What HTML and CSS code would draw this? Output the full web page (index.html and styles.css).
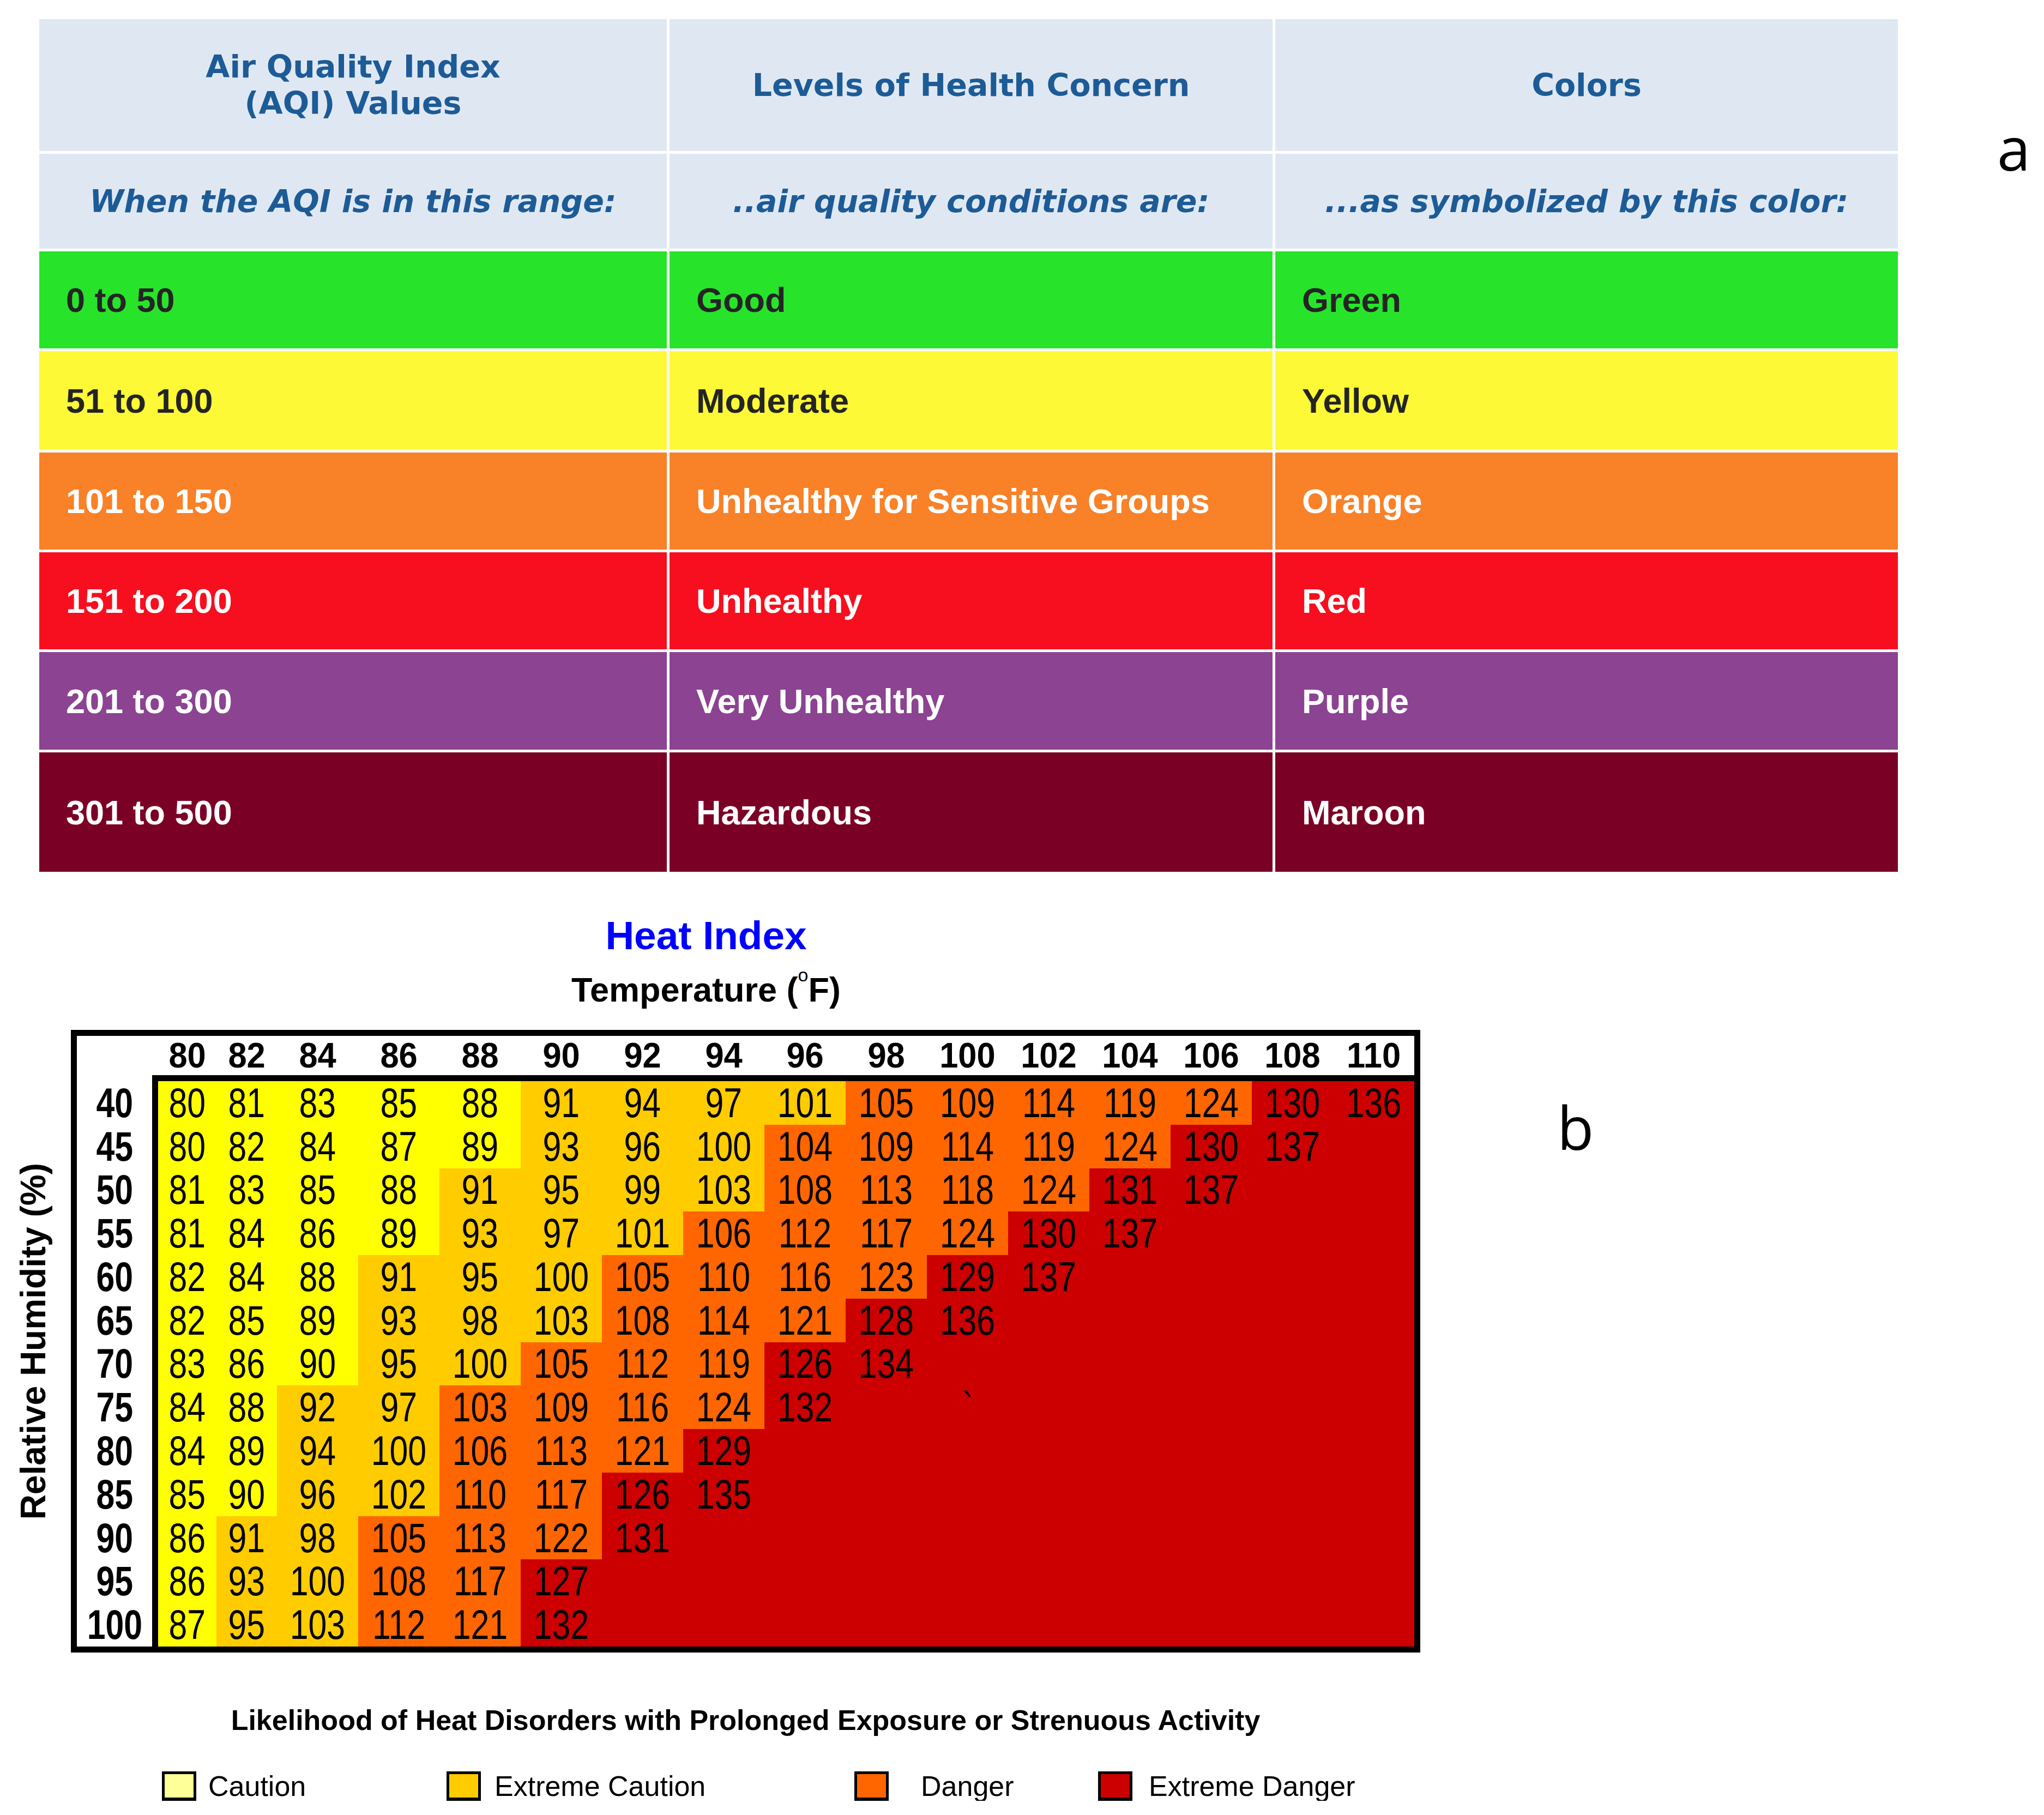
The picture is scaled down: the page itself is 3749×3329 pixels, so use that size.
FILE: index.html
```html
<!DOCTYPE html>
<html lang="en">
<head>
<meta charset="utf-8">
<title>AQI and Heat Index</title>
<link rel="stylesheet" href="styles.css">
</head>
<body>
<section class="top">
  <div class="aqi">
    <div class="aqi-h">Air Quality Index<br>(AQI) Values</div>
    <div class="aqi-h">Levels of Health Concern</div>
    <div class="aqi-h">Colors</div>
    <div class="aqi-h aqi-s">When the AQI is in this range:</div>
    <div class="aqi-h aqi-s">..air quality conditions are:</div>
    <div class="aqi-h aqi-s">...as symbolized by this color:</div>

    <div class="aqi-c good">0 to 50</div>
    <div class="aqi-c good">Good</div>
    <div class="aqi-c good">Green</div>

    <div class="aqi-c moderate">51 to 100</div>
    <div class="aqi-c moderate">Moderate</div>
    <div class="aqi-c moderate">Yellow</div>

    <div class="aqi-c usg">101 to 150</div>
    <div class="aqi-c usg">Unhealthy for Sensitive Groups</div>
    <div class="aqi-c usg">Orange</div>

    <div class="aqi-c unhealthy">151 to 200</div>
    <div class="aqi-c unhealthy">Unhealthy</div>
    <div class="aqi-c unhealthy">Red</div>

    <div class="aqi-c very">201 to 300</div>
    <div class="aqi-c very">Very Unhealthy</div>
    <div class="aqi-c very">Purple</div>

    <div class="aqi-c hazard">301 to 500</div>
    <div class="aqi-c hazard">Hazardous</div>
    <div class="aqi-c hazard">Maroon</div>
  </div>
  <div class="panel-label label-a">a</div>
</section>

<section class="heat">
  <div class="hi-titles">
    <div class="hi-title">Heat Index</div>
    <div class="hi-sub">Temperature (<span class="deg">o</span>F)</div>
  </div>

  <div class="hi-body">
    <div class="ylab"><span>Relative Humidity (%)</span></div>
    <div class="hi-box">
      <div class="corner"></div>
      <div class="temps">
        <div><span>80</span></div><div><span>82</span></div><div><span>84</span></div><div><span>86</span></div>
        <div><span>88</span></div><div><span>90</span></div><div><span>92</span></div><div><span>94</span></div>
        <div><span>96</span></div><div><span>98</span></div><div><span>100</span></div><div><span>102</span></div>
        <div><span>104</span></div><div><span>106</span></div><div><span>108</span></div><div><span>110</span></div>
      </div>
      <div class="hums">
        <div><span>40</span></div><div><span>45</span></div><div><span>50</span></div><div><span>55</span></div>
        <div><span>60</span></div><div><span>65</span></div><div><span>70</span></div><div><span>75</span></div>
        <div><span>80</span></div><div><span>85</span></div><div><span>90</span></div><div><span>95</span></div>
        <div><span>100</span></div>
      </div>
      <div class="hi-data">
        <div class="hi-row">
          <div class="y"><span>80</span></div><div class="y"><span>81</span></div><div class="y"><span>83</span></div><div class="y"><span>85</span></div><div class="y"><span>88</span></div>
          <div class="o"><span>91</span></div><div class="o"><span>94</span></div><div class="o"><span>97</span></div><div class="o"><span>101</span></div>
          <div class="d"><span>105</span></div><div class="d"><span>109</span></div><div class="d"><span>114</span></div><div class="d"><span>119</span></div><div class="d"><span>124</span></div>
          <div><span>130</span></div><div><span>136</span></div>
        </div>
        <div class="hi-row">
          <div class="y"><span>80</span></div><div class="y"><span>82</span></div><div class="y"><span>84</span></div><div class="y"><span>87</span></div><div class="y"><span>89</span></div>
          <div class="o"><span>93</span></div><div class="o"><span>96</span></div><div class="o"><span>100</span></div>
          <div class="d"><span>104</span></div><div class="d"><span>109</span></div><div class="d"><span>114</span></div><div class="d"><span>119</span></div><div class="d"><span>124</span></div>
          <div><span>130</span></div><div><span>137</span></div>
        </div>
        <div class="hi-row">
          <div class="y"><span>81</span></div><div class="y"><span>83</span></div><div class="y"><span>85</span></div><div class="y"><span>88</span></div>
          <div class="o"><span>91</span></div><div class="o"><span>95</span></div><div class="o"><span>99</span></div><div class="o"><span>103</span></div>
          <div class="d"><span>108</span></div><div class="d"><span>113</span></div><div class="d"><span>118</span></div><div class="d"><span>124</span></div>
          <div><span>131</span></div><div><span>137</span></div>
        </div>
        <div class="hi-row">
          <div class="y"><span>81</span></div><div class="y"><span>84</span></div><div class="y"><span>86</span></div><div class="y"><span>89</span></div>
          <div class="o"><span>93</span></div><div class="o"><span>97</span></div><div class="o"><span>101</span></div>
          <div class="d"><span>106</span></div><div class="d"><span>112</span></div><div class="d"><span>117</span></div><div class="d"><span>124</span></div>
          <div><span>130</span></div><div><span>137</span></div>
        </div>
        <div class="hi-row">
          <div class="y"><span>82</span></div><div class="y"><span>84</span></div><div class="y"><span>88</span></div>
          <div class="o"><span>91</span></div><div class="o"><span>95</span></div><div class="o"><span>100</span></div>
          <div class="d"><span>105</span></div><div class="d"><span>110</span></div><div class="d"><span>116</span></div><div class="d"><span>123</span></div>
          <div><span>129</span></div><div><span>137</span></div>
        </div>
        <div class="hi-row">
          <div class="y"><span>82</span></div><div class="y"><span>85</span></div><div class="y"><span>89</span></div>
          <div class="o"><span>93</span></div><div class="o"><span>98</span></div><div class="o"><span>103</span></div>
          <div class="d"><span>108</span></div><div class="d"><span>114</span></div><div class="d"><span>121</span></div>
          <div><span>128</span></div><div><span>136</span></div>
        </div>
        <div class="hi-row">
          <div class="y"><span>83</span></div><div class="y"><span>86</span></div><div class="y"><span>90</span></div>
          <div class="o"><span>95</span></div><div class="o"><span>100</span></div>
          <div class="d"><span>105</span></div><div class="d"><span>112</span></div><div class="d"><span>119</span></div>
          <div><span>126</span></div><div><span>134</span></div>
        </div>
        <div class="hi-row">
          <div class="y"><span>84</span></div><div class="y"><span>88</span></div>
          <div class="o"><span>92</span></div><div class="o"><span>97</span></div>
          <div class="d"><span>103</span></div><div class="d"><span>109</span></div><div class="d"><span>116</span></div><div class="d"><span>124</span></div>
          <div><span>132</span></div><div></div><div><span>`</span></div>
        </div>
        <div class="hi-row">
          <div class="y"><span>84</span></div><div class="y"><span>89</span></div>
          <div class="o"><span>94</span></div><div class="o"><span>100</span></div>
          <div class="d"><span>106</span></div><div class="d"><span>113</span></div><div class="d"><span>121</span></div>
          <div><span>129</span></div>
        </div>
        <div class="hi-row">
          <div class="y"><span>85</span></div><div class="y"><span>90</span></div>
          <div class="o"><span>96</span></div><div class="o"><span>102</span></div>
          <div class="d"><span>110</span></div><div class="d"><span>117</span></div>
          <div><span>126</span></div><div><span>135</span></div>
        </div>
        <div class="hi-row">
          <div class="y"><span>86</span></div>
          <div class="o"><span>91</span></div><div class="o"><span>98</span></div>
          <div class="d"><span>105</span></div><div class="d"><span>113</span></div><div class="d"><span>122</span></div>
          <div><span>131</span></div>
        </div>
        <div class="hi-row">
          <div class="y"><span>86</span></div>
          <div class="o"><span>93</span></div><div class="o"><span>100</span></div>
          <div class="d"><span>108</span></div><div class="d"><span>117</span></div>
          <div><span>127</span></div>
        </div>
        <div class="hi-row">
          <div class="y"><span>87</span></div>
          <div class="o"><span>95</span></div><div class="o"><span>103</span></div>
          <div class="d"><span>112</span></div><div class="d"><span>121</span></div>
          <div><span>132</span></div>
        </div>
      </div>
    </div>
    <div class="panel-label label-b">b</div>
  </div>

  <div class="legend-title">Likelihood of Heat Disorders with Prolonged Exposure or Strenuous Activity</div>
  <div class="legend">
    <div class="lg lg-caution"><span class="sw sw-caution"></span><span>Caution</span></div>
    <div class="lg lg-xcaution"><span class="sw sw-xcaution"></span><span>Extreme Caution</span></div>
    <div class="lg lg-danger"><span class="sw sw-danger"></span><span>Danger</span></div>
    <div class="lg lg-xdanger"><span class="sw sw-xdanger"></span><span>Extreme Danger</span></div>
  </div>
</section>
</body>
</html>
```

FILE: styles.css
```css
* { box-sizing: border-box; }

html, body {
  margin: 0;
  padding: 0;
  background: #ffffff;
}

body {
  width: 3749px;
  font-family: "Liberation Sans", Arial, sans-serif;
  color: #000000;
  --cols: 107px 111px repeat(14, 149px);
}

/* ---------- Panel a : AQI table ---------- */
.top {
  display: flex;
  align-items: flex-start;
  padding: 35px 0 0 72px;
}

.aqi {
  display: grid;
  grid-template-columns: 1151px 1106px 1142px;
  grid-template-rows: 242px 174px 178px 181px 178px 178px 179px 219px;
  gap: 5px;
  background: #ffffff;
}

.aqi-h {
  display: flex;
  align-items: center;
  justify-content: center;
  text-align: center;
  background: #dfe8f2;
  color: #1d5b97;
  font-family: "DejaVu Sans", Verdana, sans-serif;
  font-weight: 700;
  font-size: 57px;
  line-height: 67px;
}

.aqi-s {
  font-style: italic;
}

.aqi-c {
  display: flex;
  align-items: center;
  padding-left: 49px;
  font-weight: 700;
  font-size: 63px;
  color: #ffffff;
}

.good { background: #27e42b; color: #242424; }
.moderate { background: #fdf936; color: #242424; }
.usg { background: #f98128; }
.unhealthy { background: #f70f1f; }
.very { background: #8b4392; }
.hazard { background: #7b0026; }

.panel-label {
  font-family: "Open Sans", sans-serif;
  font-size: 110px;
  line-height: 110px;
  color: #000000;
}

.label-a {
  margin: 180px 0 0 182px;
}

/* ---------- Panel b : Heat index ---------- */
.heat {
  padding-top: 80px;
}

.hi-titles {
  width: 2590px;
  text-align: center;
  font-weight: 700;
}

.hi-title {
  color: #0000ff;
  font-size: 73px;
  line-height: 73px;
}

.hi-sub {
  margin-top: 32px;
  font-size: 63px;
  line-height: 63px;
}

.deg {
  font-size: 34px;
  font-weight: 400;
  line-height: 0;
  vertical-align: 37px;
}

.hi-body {
  display: flex;
  margin-top: 42px;
}

.ylab {
  width: 130px;
  display: flex;
  align-items: center;
}

.ylab span {
  writing-mode: vertical-rl;
  transform: rotate(180deg);
  font-weight: 700;
  font-size: 64px;
  line-height: 64px;
  margin-left: 29px;
  white-space: nowrap;
}

.hi-box {
  border: 11px solid #000000;
  background: #ffffff;
  display: grid;
  grid-template-columns: 138px 2315px;
  grid-template-rows: 72px 1048px;
}

.corner {
  grid-column: 1;
  grid-row: 1;
}

.temps {
  grid-column: 2;
  grid-row: 1;
  padding-left: 11px;
  display: grid;
  grid-template-columns: var(--cols);
}

.temps > div,
.hums > div,
.hi-row > div {
  display: flex;
  align-items: center;
  justify-content: center;
}

.temps span {
  display: inline-block;
  font-weight: 700;
  font-size: 64px;
  line-height: 64px;
  transform: scaleX(0.96);
}

.hums {
  grid-column: 1;
  grid-row: 2;
  padding-top: 11px;
  display: grid;
  grid-template-rows: repeat(13, 1fr);
}

.hums span {
  display: inline-block;
  font-weight: 700;
  font-size: 76px;
  line-height: 76px;
  transform: scaleX(0.8);
}

.hi-data {
  grid-column: 2;
  grid-row: 2;
  border-top: 11px solid #000000;
  border-left: 11px solid #000000;
  display: grid;
  grid-template-rows: repeat(13, 1fr);
}

.hi-row {
  display: grid;
  grid-template-columns: var(--cols);
  background: #cc0000;
}

.hi-row span {
  display: inline-block;
  font-size: 76px;
  line-height: 76px;
  transform: scaleX(0.8);
}

.hi-row .y { background: #ffff00; }
.hi-row .o { background: #ffcc00; }
.hi-row .d { background: #ff6600; }

.label-b {
  align-self: flex-start;
  margin: 122px 0 0 251px;
}

/* ---------- Legend ---------- */
.legend-title {
  margin: 98px 0 0 130px;
  width: 2475px;
  text-align: center;
  font-weight: 700;
  font-size: 52px;
  line-height: 52px;
}

.legend {
  margin-top: 68px;
  padding-left: 297px;
  display: grid;
  grid-template-columns: 522px 748px 447px auto;
}

.lg {
  display: flex;
  align-items: center;
  gap: 25px;
  font-size: 52px;
  line-height: 54px;
}

.lg-caution { gap: 22px; }
.lg-danger { gap: 59px; }
.lg-xdanger { gap: 30px; }

.sw {
  display: block;
  width: 63px;
  height: 54px;
  border: 5px solid #000000;
  border-bottom-width: 6px;
}

.sw-caution { background: #ffff99; }
.sw-xcaution { background: #ffcc00; }
.sw-danger { background: #ff6600; }
.sw-xdanger { background: #cc0000; }
```
